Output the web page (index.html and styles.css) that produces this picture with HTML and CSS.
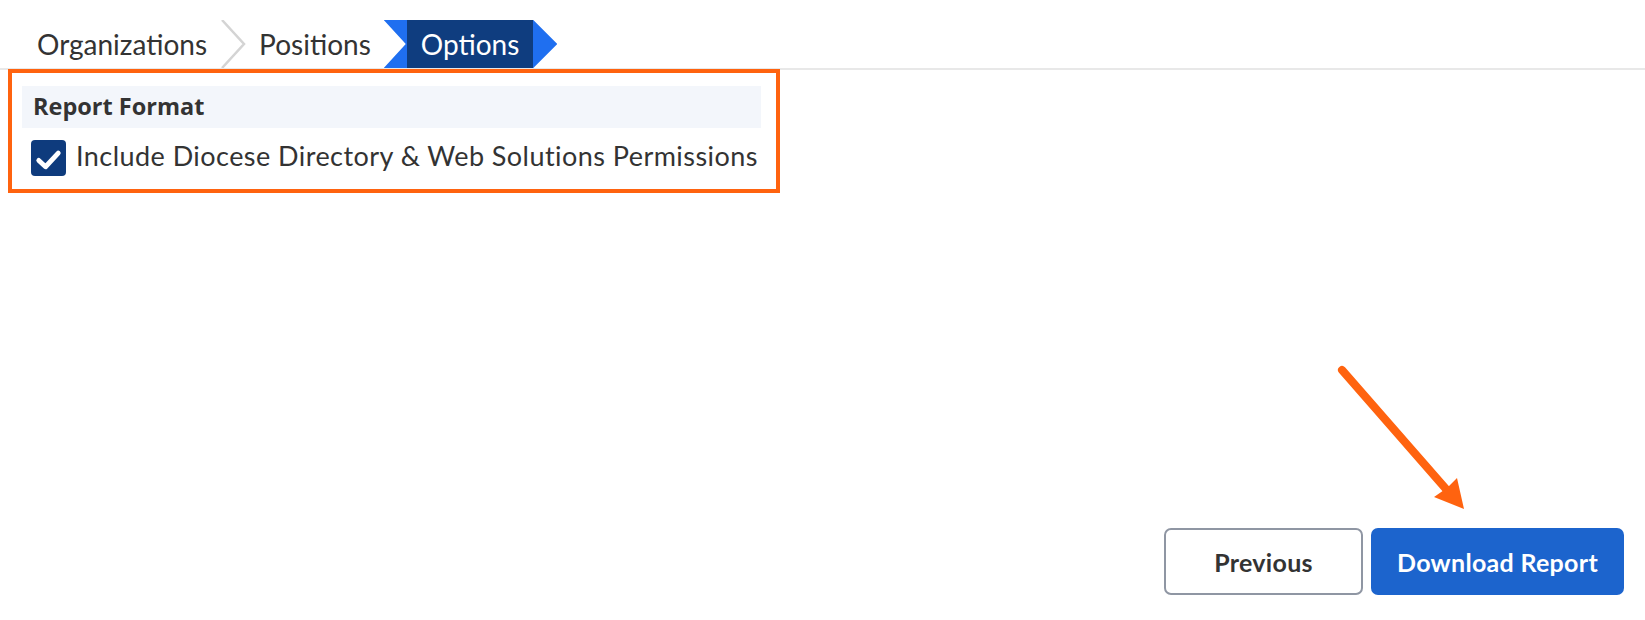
FILE: index.html
```html
<!DOCTYPE html>
<html>
<head>
    <title>Report Options</title>
    <link rel="stylesheet" href="styles.css">
</head>
<body>
    <div class="page">
        <nav class="steps">
            <span class="step">Organizations</span>
            <svg class="step-sep" width="30" height="48" viewBox="0 0 30 48">
                <polyline points="3,0 25,24 3,48" fill="none" stroke="#d4d4d4" stroke-width="2.5"/>
            </svg>
            <span class="step">Positions</span>
            <span class="step-active"><span class="step-active-label">Options</span></span>
        </nav>

        <section class="options">
            <div class="options-title">Report Format</div>
            <label class="check-row">
                <span class="checkbox">
                    <svg width="36" height="36" viewBox="0 0 36 36">
                        <polyline points="8,20.5 15,27 28,13" fill="none" stroke="#fff" stroke-width="5" stroke-linecap="round" stroke-linejoin="round"/>
                    </svg>
                </span>
                <span class="check-label">Include Diocese Directory &amp; Web Solutions Permissions</span>
            </label>
        </section>

        <div class="actions">
            <button class="btn btn-outline">Previous</button>
            <button class="btn btn-primary">Download Report</button>
        </div>

        <!-- flecha de anotación -->
        <svg class="callout-arrow" width="150" height="160" viewBox="0 0 150 160">
            <line x1="12" y1="10" x2="116" y2="129" stroke="#ff630f" stroke-width="8" stroke-linecap="round"/>
            <polygon points="134,149 104,137 117,128 127,118" fill="#ff630f"/>
        </svg>
    </div>
</body>
</html>
```

FILE: styles.css
```css
body { margin: 0; font-family: Lato, "Open Sans", sans-serif; color: #333; background: #fff; }
.page { position: relative; min-height: 100vh; display: flex; flex-direction: column; }

.steps {
    display: flex;
    align-items: center;
    height: 48px;
    padding: 20px 0 0 37px;
    border-bottom: 2px solid #e8e8e8;
}
.step { font-size: 28px; line-height: 48px; color: #333; }
.step-sep { margin: 0 10px 0 12px; flex: none; }
.step-active {
    display: flex;
    height: 48px;
    margin-left: 13px;
    padding: 0 24px 0 23px;
    background: #1f6ff0;
    clip-path: polygon(0 0, calc(100% - 24px) 0, 100% 50%, calc(100% - 24px) 100%, 0 100%, 22px 50%);
}
.step-active-label {
    background: #0f3d7f;
    color: #fff;
    font-size: 28px;
    line-height: 48px;
    padding: 0 14px;
}

.options {
    width: 739px;
    margin: -1px 0 0 8px;
    padding: 13px 15px 13px 10px;
    border: 4px solid #ff630f;
}
.options-title {
    background: #f3f6fb;
    height: 42px;
    line-height: 40px;
    padding-left: 11px;
    font-family: "Open Sans", sans-serif;
    font-size: 23.5px;
    font-weight: bold;
}
.check-row {
    display: flex;
    align-items: center;
    gap: 10px;
    margin: 12px 0 0 9px;
    font-size: 27px;
    letter-spacing: 0.45px;
    line-height: 36px;
}
.check-label { margin-top: -5px; }
.checkbox {
    width: 35px;
    height: 36px;
    border-radius: 4px;
    background: #0e3b7d;
    display: flex;
    flex: none;
}

.actions {
    margin-top: auto;
    display: flex;
    justify-content: flex-end;
    gap: 8px;
    padding: 0 21px 25px 0;
}
.btn {
    height: 67px;
    font-family: Lato, "Open Sans", sans-serif;
    font-size: 25px;
    font-weight: bold;
    letter-spacing: 0.3px;
    border-radius: 7px;
    cursor: pointer;
}
.btn-outline { width: 199px; background: #fff; color: #333; border: 2px solid #8f96a3; }
.btn-primary { width: 253px; background: #1c64cd; color: #fff; border: none; }

.callout-arrow { position: absolute; left: 1330px; top: 360px; }
```
